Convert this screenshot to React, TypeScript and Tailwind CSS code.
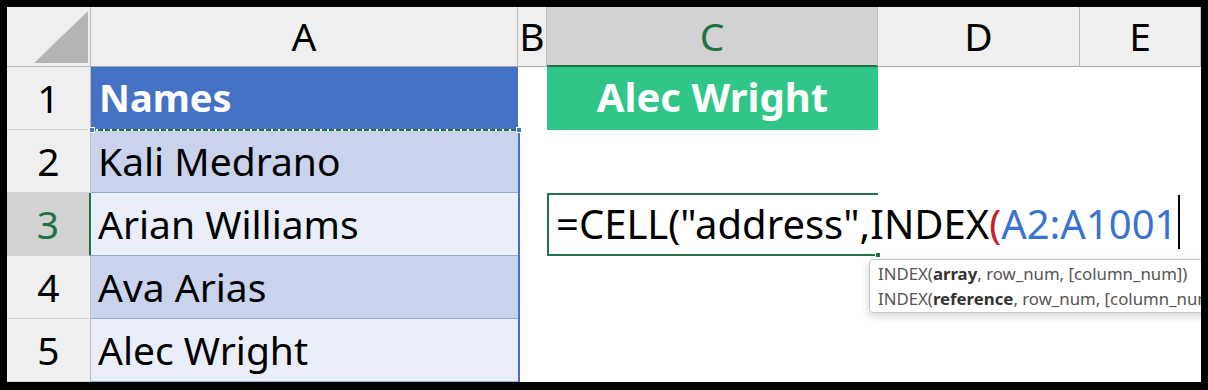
const COLS = ['A', 'B', 'C', 'D', 'E'];

const NAMES = ['Kali Medrano', 'Arian Williams', 'Ava Arias', 'Alec Wright'];

const cellFont = { fontFamily: '"Noto Sans", "Open Sans", sans-serif' };

function CornerCell() {
  return (
    <div className="relative bg-[#efefef] border-r border-b border-[#bdbdbd]">
      <svg className="absolute left-[27px] top-[4px]" width="55" height="53" viewBox="0 0 55 53">
        <polygon points="0,52 54,52 54,0" fill="#b5b5b5" />
      </svg>
    </div>
  );
}

function ColHeader({ label, active }: { label: string; active?: boolean }) {
  return (
    <div
      className={
        'flex items-center justify-center text-[39px] leading-none border-r ' +
        (active
          ? 'bg-[#d2d2d2] text-[#217346] border-[#bdbdbd] border-b-2 border-b-[#217346]'
          : 'bg-[#efefef] text-black border-[#bdbdbd] border-b border-b-[#a9a9a9]')
      }
    >
      <span className="-mt-[2px]">{label}</span>
    </div>
  );
}

function RowHeader({ n, active }: { n: number; active?: boolean }) {
  return (
    <div
      className={
        'flex items-center justify-center text-[39px] leading-none border-b border-[#d4d4d4] ' +
        (active
          ? 'bg-[#d2d2d2] text-[#217346] border-r-2 border-r-[#217346]'
          : 'bg-[#efefef] text-black border-r border-r-[#bdbdbd]')
      }
    >
      <span className="-mt-[2px]">{n}</span>
    </div>
  );
}

export default function App() {
  return (
    <div className="w-[1208px] h-[390px] bg-black pt-[7px] pl-[7px]" style={cellFont}>
      <div className="relative overflow-hidden w-[1194px] h-[375px] bg-white grid grid-cols-[84px_427px_29px_331px_202px_121px] grid-rows-[60px_63px_63px_63px_63px_63px]">
        {/* header row */}
        <CornerCell />
        {COLS.map(c => (
          <ColHeader key={c} label={c} active={c === 'C'} />
        ))}

        {/* row 1 */}
        <RowHeader n={1} />
        <div className="relative flex items-center bg-[#4472c4] pl-[8px] text-white font-bold text-[38px] leading-none">
          <span className="-mt-[3px]">Names</span>
          <div className="absolute left-0 right-0 bottom-[-1px] h-[2px] bg-[repeating-linear-gradient(90deg,#217346_0_5px,#ffffff_5px_7px)]" />
        </div>
        <div />
        <div className="flex items-center justify-center bg-[#2fc687] text-white font-bold text-[40px] leading-none">
          <span className="-mt-[3px]">Alec Wright</span>
        </div>
        <div />
        <div />

        {/* rows 2-5 */}
        {NAMES.map((name, i) => {
          const row = i + 2;
          return (
            <div key={name} className="contents">
              <RowHeader n={row} active={row === 3} />
              <div
                className={
                  'flex items-center pl-[7px] text-[39px] leading-none text-black border-b border-[#8eaadb] ' +
                  (i % 2 === 0 ? 'bg-[#c9d4ec]' : 'bg-[#e9eef8]')
                }
              >
                <span className="-mt-[2px] whitespace-nowrap">{name}</span>
              </div>
              <div />
              {row === 3 ? (
                <div className="relative z-10 border-t-2 border-l-2 border-b-2 border-[#217346] bg-white">
                  <div className="absolute left-[7px] top-0 bottom-0 flex items-center whitespace-nowrap text-[40px] leading-none text-black bg-white pr-[6px]">
                    <span className="-mt-[2px]">
                      =CELL("address",INDEX<span className="text-[#c8202a]">(</span>
                      <span className="text-[#3a72cf]">A2:A1001</span>
                    </span>
                    <span className="ml-[1px] -mt-[6px] w-[1.5px] h-[54px] bg-black" />
                  </div>
                  <div className="absolute right-[-3px] bottom-[-4px] w-[6px] h-[6px] bg-[#217346] border border-white" />
                  {/* function tooltip */}
                  <div className="absolute left-[320px] top-[64px] w-[360px] h-[54px] overflow-hidden rounded-[4px] border border-[#c6c6c6] bg-white shadow-[0_3px_8px_rgba(0,0,0,0.18)] pl-[8px] pt-[1px] text-[16.8px] leading-[25px] text-[#555]">
                    <div className="whitespace-nowrap">
                      INDEX(<b className="text-[#333]">array</b>, row_num, [column_num])
                    </div>
                    <div className="whitespace-nowrap">
                      INDEX(<b className="text-[#333]">reference</b>, row_num, [column_num
                    </div>
                  </div>
                </div>
              ) : (
                <div />
              )}
              <div />
              <div />
            </div>
          );
        })}

        {/* referenced range border A2:A5 */}
        <div className="absolute left-[84px] top-[123px] w-[428px] h-[252px] pointer-events-none">
          <div className="absolute right-[-1px] top-0 bottom-0 w-[2px] bg-[#4472c4]" />
          <div className="absolute right-[-3px] top-[-3px] w-[6px] h-[6px] bg-[#4472c4] border border-white" />
          <div className="absolute left-[-2px] top-[-3px] w-[6px] h-[6px] bg-[#4472c4] border border-white" />
        </div>
      </div>
    </div>
  );
}
